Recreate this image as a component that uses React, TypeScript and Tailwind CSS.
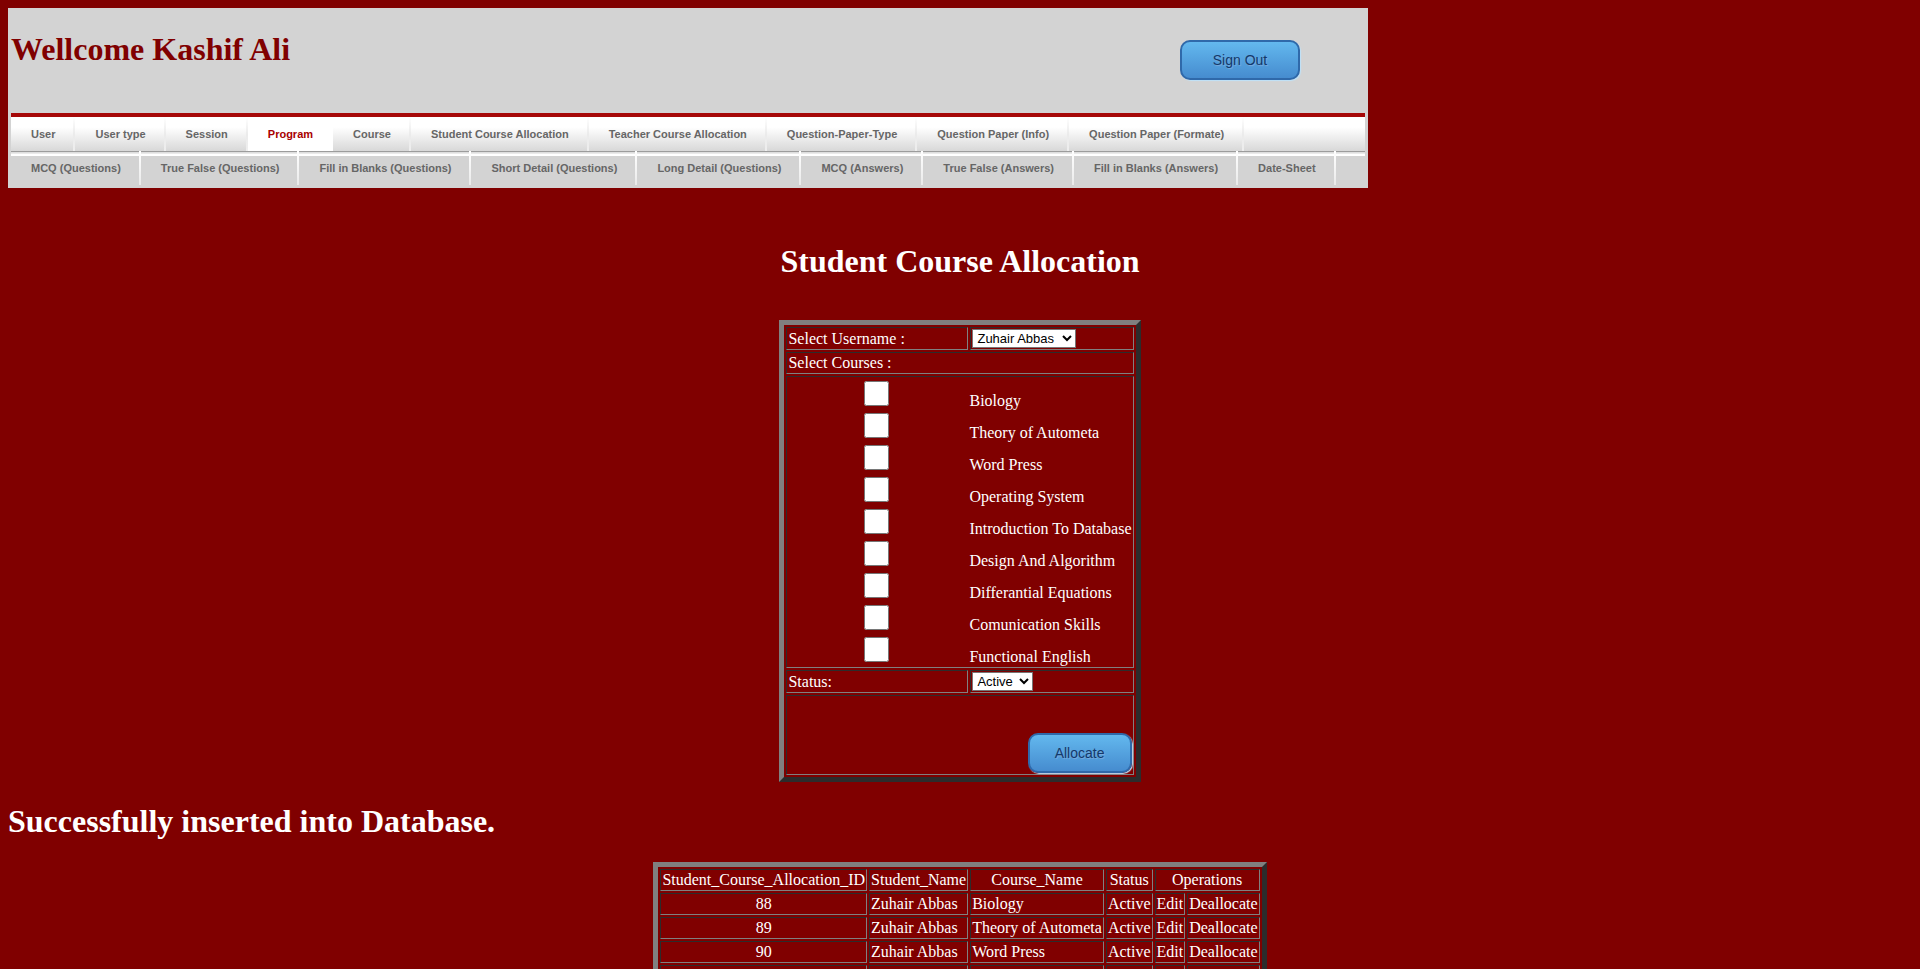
import React from "react";

const mainTabs = [
  "User",
  "User type",
  "Session",
  "Program",
  "Course",
  "Student Course Allocation",
  "Teacher Course Allocation",
  "Question-Paper-Type",
  "Question Paper (Info)",
  "Question Paper (Formate)",
];

const subTabs = [
  "MCQ (Questions)",
  "True False (Questions)",
  "Fill in Blanks (Questions)",
  "Short Detail (Questions)",
  "Long Detail (Questions)",
  "MCQ (Answers)",
  "True False (Answers)",
  "Fill in Blanks (Answers)",
  "Date-Sheet",
];

const courses = [
  "Biology",
  "Theory of Autometa",
  "Word Press",
  "Operating System",
  "Introduction To Database",
  "Design And Algorithm",
  "Differantial Equations",
  "Comunication Skills",
  "Functional English",
];

const allocated = courses.slice(0, 4);

const tableClass =
  "mx-auto border-separate border-spacing-[2px] border-[5px] border-t-[#808080] border-l-[#808080] border-b-[#2c2c2c] border-r-[#2c2c2c]";
const cellClass =
  "border border-t-[#2c2c2c] border-l-[#2c2c2c] border-b-[#808080] border-r-[#808080] p-px font-normal";
const buttonClass =
  "h-10 rounded-[10px] border-2 border-[#2f69aa] bg-linear-to-b from-[#63b8ee] to-[#468ccf] font-['Liberation_Sans',Arial,sans-serif] text-sm text-[#14396a] shadow-[1px_1px_1px_#bee2f9] [text-shadow:1px_1px_1px_#7cacde]";
const selectClass =
  "block h-[19px] rounded-none border border-[#767676] bg-white font-['Liberation_Sans',Arial,sans-serif] text-[13px] leading-4 text-black";

function MainTab({ label, active }: { label: string; active: boolean }) {
  return (
    <li className="flex">
      <a
        href="#"
        className={
          active
            ? "block bg-white pr-[18px] pl-5 leading-[34px] text-[#a80000]"
            : "block pr-[18px] pl-5 leading-[34px] text-[#666666]"
        }
      >
        {label}
      </a>
      <span
        className={
          active ? "w-0.5 bg-white" : "w-0.5 bg-linear-to-b from-white via-[#ebebeb] to-[#eeeeee]"
        }
      />
    </li>
  );
}

function Header() {
  return (
    <header className="w-[1360px] max-w-full bg-[#d3d3d3] p-[3px] pb-0">
      <div className="flex h-[102px] items-start justify-between pt-3">
        <h1 className="pt-2 text-[32px] leading-[37px] font-bold text-[#800000]">Wellcome Kashif Ali</h1>
        <button type="button" className={`${buttonClass} mt-[17px] mr-[65px] w-[120px]`}>
          Sign Out
        </button>
      </div>
      <nav className="font-['Liberation_Sans',Arial,sans-serif] text-[11px] font-bold whitespace-nowrap">
        <ul className="flex h-[38px] border-t-4 border-[#a60808] bg-linear-to-b from-white from-30% to-[#d8d8d8]">
          {mainTabs.map((tab) => (
            <MainTab key={tab} label={tab} active={tab === "Program"} />
          ))}
        </ul>
        <ul className="flex h-[37px] bg-[linear-gradient(#9c9c9c_1px,#d8d8d8_1px,#f0f0f0_3px,#ffffff_3px,#ffffff_5px,#d3d3d3_5px)]">
          {subTabs.map((tab) => (
            <li key={tab} className="flex h-[34px]">
              <a href="#" className="block pr-[18px] pl-5 leading-[34px] text-[#666666]">
                {tab}
              </a>
              <span className="w-0.5 bg-linear-to-b from-white to-[#eaeaea]" />
            </li>
          ))}
        </ul>
      </nav>
    </header>
  );
}

function AllocationForm() {
  return (
    <form>
      <table className={tableClass}>
        <tbody>
          <tr>
            <td className={`${cellClass} w-[182px]`}>
              <label htmlFor="username">Select Username :</label>
            </td>
            <td className={cellClass}>
              <select id="username" className={`${selectClass} w-[104px]`}>
                <option>Zuhair Abbas</option>
              </select>
            </td>
          </tr>
          <tr>
            <td className={cellClass} colSpan={2}>
              Select Courses :
            </td>
          </tr>
          <tr>
            <td className={cellClass} colSpan={2}>
              {courses.map((course, i) => (
                <div key={course} className="flex h-8 gap-1">
                  <span className="flex w-[177px] items-start justify-center pt-[3px]">
                    <input id={`course-${i}`} type="checkbox" className="size-[25px]" />
                  </span>
                  <label htmlFor={`course-${i}`} className="self-end whitespace-nowrap">
                    {course}
                  </label>
                </div>
              ))}
            </td>
          </tr>
          <tr>
            <td className={cellClass}>
              <label htmlFor="status">Status:</label>
            </td>
            <td className={cellClass}>
              <select id="status" className={`${selectClass} w-[61px]`}>
                <option>Active</option>
              </select>
            </td>
          </tr>
          <tr>
            <td className={cellClass} colSpan={2}>
              <button type="button" className={`${buttonClass} mt-9 ml-auto block w-[104px]`}>
                Allocate
              </button>
            </td>
          </tr>
        </tbody>
      </table>
    </form>
  );
}

function AllocationList() {
  return (
    <table className={`${tableClass} whitespace-nowrap`}>
      <thead>
        <tr>
          <th className={cellClass}>Student_Course_Allocation_ID</th>
          <th className={cellClass}>Student_Name</th>
          <th className={cellClass}>Course_Name</th>
          <th className={cellClass}>Status</th>
          <th className={cellClass} colSpan={2}>
            Operations
          </th>
        </tr>
      </thead>
      <tbody>
        {allocated.map((course, i) => (
          <tr key={course}>
            <td className={`${cellClass} text-center`}>{88 + i}</td>
            <td className={cellClass}>Zuhair Abbas</td>
            <td className={cellClass}>{course}</td>
            <td className={cellClass}>Active</td>
            <td className={cellClass}>
              <a href="#">Edit</a>
            </td>
            <td className={cellClass}>
              <a href="#">Deallocate</a>
            </td>
          </tr>
        ))}
      </tbody>
    </table>
  );
}

export default function App() {
  return (
    <div className="min-h-screen bg-[#800000] p-2 font-['Liberation_Serif','Times_New_Roman',serif] text-base leading-[18px] text-white">
      <Header />
      <main>
        <h1 className="mt-[55px] mb-10 text-center text-[32px] leading-[37px] font-bold">
          Student Course Allocation
        </h1>
        <AllocationForm />
        <h1 className="mt-[21px] mb-[22px] text-[32px] leading-[37px] font-bold">
          Successfully inserted into Database.
        </h1>
        <AllocationList />
      </main>
    </div>
  );
}
